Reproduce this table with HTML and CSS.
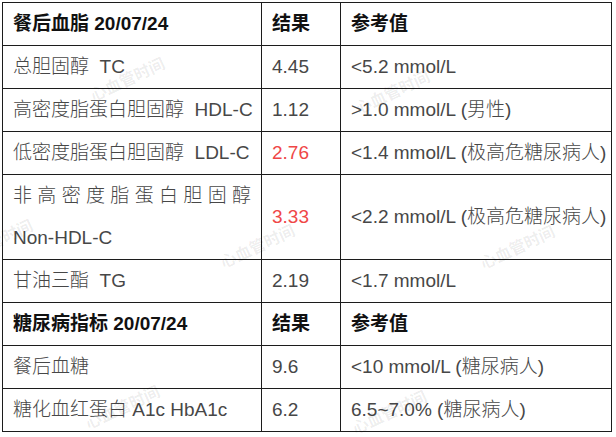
FILE: index.html
```html
<!DOCTYPE html>
<html lang="zh-CN">
<head>
  <meta charset="UTF-8" />
  <meta name="viewport" content="width=device-width, initial-scale=1.0" />
  <title>血脂 / 糖尿病指标</title>
  <link rel="stylesheet" href="styles.css">
</head>
<body>

  <div class="sheet">
    <table class="report">
      <colgroup>
        <col class="col-name">
        <col class="col-result">
        <col class="col-ref">
      </colgroup>
      <tr class="head">
        <td>餐后血脂 20/07/24</td>
        <td>结果</td>
        <td>参考值</td>
      </tr>
      <tr>
        <td>总胆固醇&nbsp; TC</td>
        <td>4.45</td>
        <td>&lt;5.2 mmol/L</td>
      </tr>
      <tr>
        <td>高密度脂蛋白胆固醇&nbsp; HDL-C</td>
        <td>1.12</td>
        <td>&gt;1.0 mmol/L (男性)</td>
      </tr>
      <tr>
        <td>低密度脂蛋白胆固醇&nbsp; LDL-C</td>
        <td class="high">2.76</td>
        <td>&lt;1.4 mmol/L (极高危糖尿病人)</td>
      </tr>
      <tr>
        <td class="spread">非高密度脂蛋白胆固醇 <span class="nowrap">Non-HDL-C</span></td>
        <td class="high">3.33</td>
        <td>&lt;2.2 mmol/L (极高危糖尿病人)</td>
      </tr>
      <tr>
        <td>甘油三酯&nbsp; TG</td>
        <td>2.19</td>
        <td>&lt;1.7 mmol/L</td>
      </tr>
      <tr class="head">
        <td>糖尿病指标 20/07/24</td>
        <td>结果</td>
        <td>参考值</td>
      </tr>
      <tr>
        <td>餐后血糖</td>
        <td>9.6</td>
        <td>&lt;10 mmol/L (糖尿病人)</td>
      </tr>
      <tr>
        <td>糖化血红蛋白 A1c HbA1c</td>
        <td>6.2</td>
        <td>6.5~7.0% (糖尿病人)</td>
      </tr>
    </table>

    <!-- watermark layer -->
    <div class="watermarks">
      <span class="wm wm-1">心血管时间</span>
      <span class="wm wm-2">心血管时间</span>
      <span class="wm wm-3">心血管时间</span>
      <span class="wm wm-4">心血管时间</span>
      <span class="wm wm-5">心血管时间</span>
      <span class="wm wm-6">心血管时间</span>
      <span class="wm wm-7">心血管时间</span>
      <span class="wm wm-8">心血管时间</span>
      <span class="wm wm-9">心血管时间</span>
    </div>
  </div>

</body>
</html>
```

FILE: styles.css
```css
* {
  box-sizing: border-box;
}

body {
  margin: 0;
  background: #fff;
  font-family: "Liberation Sans", "Noto Sans CJK SC", sans-serif;
}

.sheet {
  position: relative;
  width: 616px;
  height: 437px;
  padding: 2px 0 0 2px;
  overflow: hidden;
}

.report {
  border-collapse: collapse;
  table-layout: fixed;
  width: 609px;
}

.col-name {
  width: 259px;
}

.col-result {
  width: 79px;
}

.col-ref {
  width: 271px;
}

.report td {
  border: 1px solid #1c1c1c;
  padding: 0 10px;
  font-size: 19px;
  line-height: 42px;
  color: #474747;
  font-weight: 300;
  vertical-align: middle;
  white-space: nowrap;
}

.report .head td {
  color: #111;
  font-weight: bold;
}

.report td.high {
  color: #ef4747;
}

.report td.spread {
  white-space: normal;
  text-align: justify;
}

.nowrap {
  white-space: nowrap;
}

/* Watermarks */
.watermarks {
  position: absolute;
  top: 0;
  left: 0;
  width: 100%;
  height: 100%;
  pointer-events: none;
}

.wm {
  position: absolute;
  font-size: 16px;
  font-weight: bold;
  line-height: 1;
  color: rgba(0, 0, 0, 0.08);
  white-space: nowrap;
  transform: translate(-50%, -50%) rotate(-25deg);
}

.wm-1 { left: 128px; top: 80px; }
.wm-2 { left: 393px; top: 93px; }
.wm-3 { left: 653px; top: 98px; }
.wm-4 { left: -4px; top: 242px; }
.wm-5 { left: 258px; top: 247px; }
.wm-6 { left: 518px; top: 248px; }
.wm-7 { left: 123px; top: 408px; }
.wm-8 { left: 390px; top: 413px; }
.wm-9 { left: 650px; top: 428px; }
```
